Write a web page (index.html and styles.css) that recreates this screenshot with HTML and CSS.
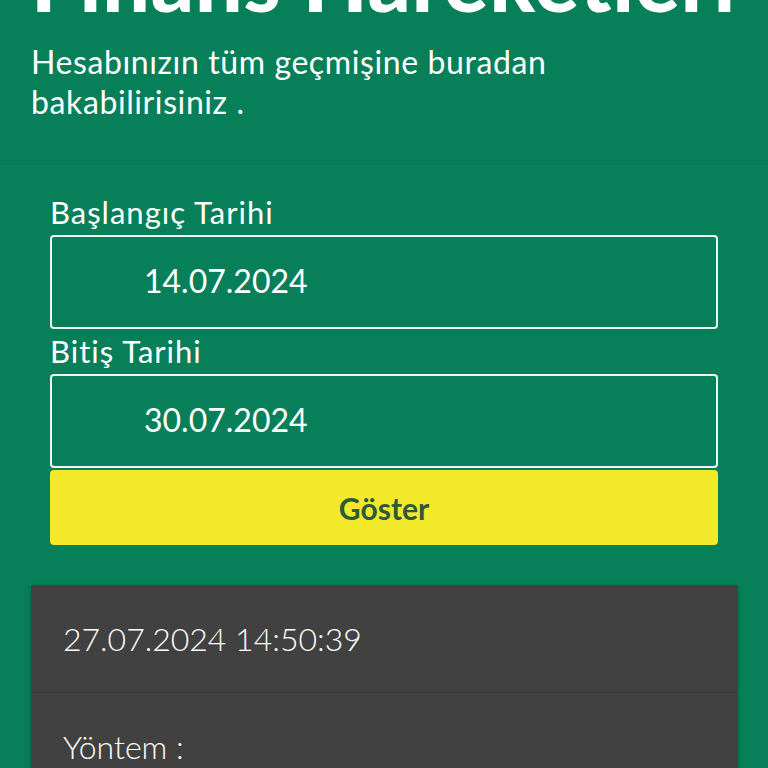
FILE: index.html
```html
<!DOCTYPE html>
<html lang="tr">
<head>
<meta charset="utf-8">
<title>Finans Hareketleri</title>
<link rel="stylesheet" href="styles.css">
</head>
<body>
<header class="intro">
  <h1 class="title">Finans Hareketleri</h1>
  <p class="lead">Hesabınızın tüm geçmişine buradan<br>bakabilirisiniz .</p>
</header>
<main class="content">
  <form class="filter">
    <label class="field-label">Başlangıç Tarihi</label>
    <div class="date-input">14.07.2024</div>
    <label class="field-label">Bitiş Tarihi</label>
    <div class="date-input">30.07.2024</div>
    <button type="button" class="btn">Göster</button>
  </form>
  <section class="card">
    <div class="card-row">27.07.2024 14:50:39</div>
    <div class="card-row">Yöntem :</div>
  </section>
</main>
</body>
</html>
```
FILE: styles.css
```css
html, body {
  margin: 0;
  padding: 0;
  background: #07805a;
  color: #ffffff;
  font-family: Lato, "Open Sans", sans-serif;
  overflow: hidden;
}
.intro {
  display: flow-root;
  padding: 0 0 0 31px;
  border-bottom: 1px solid #0a7653;
  height: 161px;
  box-sizing: border-box;
}
.title {
  margin: -62px 0 0 0;
  font-size: 84px;
  line-height: 84px;
  font-weight: 900;
  letter-spacing: 1px;
  white-space: nowrap;
}
.lead {
  margin: 20px 0 0 0;
  font-size: 32px;
  line-height: 40px;
  font-weight: 400;
  letter-spacing: 0.6px;
}
.content {
  padding: 29px 50px 0 50px;
}
.filter {
  display: flex;
  flex-direction: column;
}
.field-label {
  font-size: 31px;
  line-height: 45px;
  letter-spacing: 1px;
}
.date-input {
  height: 94px;
  box-sizing: border-box;
  border: 2px solid #eef6f1;
  border-radius: 4px;
  display: flex;
  align-items: center;
  padding: 0 0 4px 92px;
  font-size: 32px;
}
.btn {
  margin-top: 2px;
  height: 75px;
  background: #f2e92a;
  border: none;
  border-radius: 4px;
  color: #2c5a3b;
  font-family: Lato, sans-serif;
  font-weight: 700;
  font-size: 30px;
}
.card {
  margin: 40px -20px 0 -19px;
  background: #414141;
  box-shadow: 0 2px 6px rgba(0,0,0,0.25);
}
.card-row {
  height: 107px;
  display: flex;
  align-items: center;
  padding-left: 32px;
  font-size: 32px;
  font-weight: 300;
  border-bottom: 1px solid #393939;
}
```
